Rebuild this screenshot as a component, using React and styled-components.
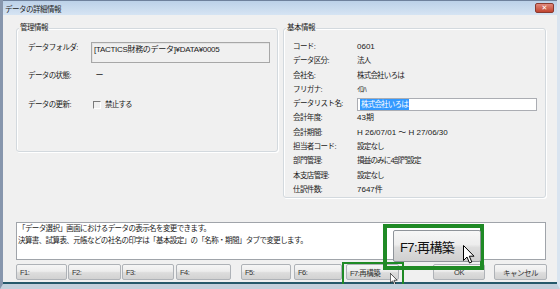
import React from 'react';
import styled, { createGlobalStyle } from 'styled-components';

const Global = createGlobalStyle`
  html, body { margin: 0; padding: 0; background: #f0f0f0; }
  body { font-family: "Liberation Sans", "Noto Sans CJK JP", sans-serif; font-size: 8px; color: #1a1a1a; }
  * { box-sizing: border-box; }
`;

const Window = styled.div`
  position: relative;
  width: 560px;
  height: 289px;
  display: flex;
  flex-direction: column;
  background: #f0f0f0;
  border-left: 3px solid #8796ad;
  border-right: 3px solid #d9e4f0;
  border-bottom: 5px solid #c3d0dc;
  box-shadow: inset 0 -2px 0 #25596b;
  overflow: hidden;
`;

const TitleBar = styled.div`
  height: 15px;
  flex: none;
  display: flex;
  align-items: center;
  justify-content: space-between;
  padding: 0 3px 0 2px;
  background: linear-gradient(#bcd1e8, #d6e4f3);
  border-top: 1px solid #6f819c;
  font-size: 7.5px;
  letter-spacing: -0.5px;
  color: #1e1e1e;
`;

const CloseBtn = styled.div`
  width: 19px;
  height: 10px;
  border-radius: 2px;
  background: linear-gradient(#e0877a, #c1442f);
  border: 1px solid #8a3a30;
  display: flex;
  align-items: center;
  justify-content: center;
  color: #fff;
  font-family: "DejaVu Sans", sans-serif;
  font-size: 7px;
  font-weight: bold;
  letter-spacing: 0;
  line-height: 1;
`;

const Body = styled.div`
  flex: 1;
  display: flex;
  flex-direction: column;
  padding: 7px 11px 0 13px;
`;

const Groups = styled.div`
  display: grid;
  grid-template-columns: 262px 263px;
  column-gap: 5px;
  align-items: start;
`;

const Group = styled.div`
  position: relative;
  margin-top: 6px;
  height: ${p => p.$h}px;
  background: #f0f0f0;
  border: 1px solid #d3d9de;
  border-radius: 3px;
  box-shadow: inset 1px 1px 0 #fff, 1px 1px 0 #fff;
`;

const GroupTitle = styled.span`
  position: absolute;
  top: -7px;
  left: 2px;
  padding: 0 1px;
  background: #f0f0f0;
  line-height: 12px;
  font-size: 7.5px;
  letter-spacing: -0.5px;
`;

const LeftGrid = styled.div`
  display: grid;
  grid-template-columns: 63px 179px;
  padding: 13px 0 0 11px;
`;

const Label = styled.div`
  line-height: 12px;
  margin-top: ${p => p.$mt || 0}px;
  white-space: nowrap;
  font-size: 7.5px;
  letter-spacing: -0.6px;
`;

const Value = styled.div`
  line-height: 12px;
  margin-top: ${p => p.$mt || 0}px;
  white-space: nowrap;
  display: flex;
  align-items: center;
  gap: 4px;
  font-size: ${p => (p.$cjk ? '7.5px' : '8px')};
  letter-spacing: ${p => (p.$cjk ? '-0.8px' : '0')};
`;

const FolderBox = styled.div`
  height: 21px;
  border: 1px solid #a7a7a7;
  box-shadow: inset 1px 1px 0 #e3e3e3;
  padding: 1px 2px;
  line-height: 12px;
  white-space: nowrap;
  overflow: hidden;
  letter-spacing: -0.3px;
`;

const Check = styled.span`
  width: 8px;
  height: 8px;
  margin-left: 2px;
  border-top: 1px solid #7a7a7a;
  border-left: 1px solid #7a7a7a;
  border-right: 1px solid #fff;
  border-bottom: 1px solid #fff;
  background: #f0f0f0;
  display: inline-block;
`;

const RightGrid = styled.div`
  display: grid;
  grid-template-columns: 64px 180px;
  grid-template-rows: repeat(11, 14px);
  row-gap: 0.3px;
  align-items: center;
  padding: 11px 0 0 9px;
`;

const InputBox = styled.div`
  height: 13px;
  border: 1px solid #abadb3;
  background: #fff;
  display: flex;
  align-items: center;
  padding-left: 2px;
`;

const Selected = styled.span`
  background: #3399ff;
  color: #fff;
  line-height: 11px;
  padding: 0 1px;
  font-size: 7.5px;
  letter-spacing: -0.8px;
`;

const Help = styled.div`
  margin-top: 24px;
  height: 38px;
  width: 530px;
  background: #fff;
  border: 1px solid #a0a4aa;
  padding: 0 1px;
  line-height: 12px;
  font-size: 7.5px;
  letter-spacing: -0.6px;
  white-space: nowrap;
`;

const Buttons = styled.div`
  margin-top: 4px;
  display: flex;
  height: 16px;
  width: 531px;
`;

const FButton = styled.div`
  width: ${p => p.$w}px;
  margin-left: ${p => p.$ml || 0}px;
  height: 16px;
  flex: none;
  border: 1px solid #aeb2b7;
  border-radius: 2px;
  background: linear-gradient(#f6f6f6 0%, #ececec 45%, #dcdcdc 55%, #d2d2d2 100%);
  display: flex;
  align-items: center;
  justify-content: ${p => (p.$center ? 'center' : 'flex-start')};
  padding-left: ${p => (p.$center ? 0 : 3)}px;
  font-size: 7.5px;
  letter-spacing: -0.5px;
  color: #333;
  white-space: nowrap;
`;

const Highlight = styled.div`
  position: absolute;
  left: ${p => p.$x}px;
  top: ${p => p.$y}px;
  width: ${p => p.$w}px;
  height: ${p => p.$h}px;
  border: ${p => p.$b}px solid #1f8a25;
  pointer-events: none;
`;

const BigBtn = styled.div`
  position: absolute;
  left: 390px;
  top: 230px;
  width: 88px;
  height: 32px;
  border: 1px solid #8f949a;
  border-radius: 2px;
  background: linear-gradient(#f7f7f7 0%, #ededed 45%, #dddddd 55%, #cfcfcf 100%);
  display: flex;
  align-items: center;
  padding-left: 6px;
  font-size: 13px;
  letter-spacing: -0.6px;
  color: #111;
  white-space: nowrap;
`;

const CursorSvg = styled.svg`
  position: absolute;
  left: ${p => p.$x}px;
  top: ${p => p.$y}px;
  pointer-events: none;
`;

function Cursor({ x, y, s = 1 }) {
  return (
    <CursorSvg $x={x} $y={y} width={12 * s} height={19 * s} viewBox="0 0 12 19">
      <path d="M0.5 0.5 L0.5 15.5 L4 12 L6.5 18 L8.8 17 L6.3 11.2 L11 11.2 Z" fill="#fff" stroke="#000" strokeWidth="1" strokeLinejoin="round" />
    </CursorSvg>
  );
}

export default function App() {
  const rows = [
    ['コード:', '0601', false],
    ['データ区分:', '法人', true],
    ['会社名:', '株式会社いろは', true],
    ['フリガナ:', 'ｲﾛﾊ', true],
    ['データリスト名:', null, false],
    ['会計年度:', '43期', false],
    ['会計期間:', 'H 26/07/01 ～ H 27/06/30', false],
    ['担当者コード:', '設定なし', true],
    ['部門管理:', '損益のみに4部門設定', true],
    ['本支店管理:', '設定なし', true],
    ['仕訳件数:', '7647件', false],
  ];
  return (
    <>
      <Global />
      <Window>
        <TitleBar>
          <span>データの詳細情報</span>
          <CloseBtn>✕</CloseBtn>
        </TitleBar>
        <Body>
          <Groups>
            <Group $h={124}>
              <GroupTitle>管理情報</GroupTitle>
              <LeftGrid>
                <Label>データフォルダ:</Label>
                <FolderBox>[TACTICS財務のデータ]¥DATA¥0005</FolderBox>
                <Label $mt={7}>データの状態:</Label>
                <Value $mt={7}>&nbsp;&nbsp;ー</Value>
                <Label $mt={17}>データの更新:</Label>
                <Value $mt={17} $cjk><Check />禁止する</Value>
              </LeftGrid>
            </Group>
            <Group $h={170}>
              <GroupTitle>基本情報</GroupTitle>
              <RightGrid>
                {rows.map(([l, v, cjk]) => (
                  <React.Fragment key={l}>
                    <Label>{l}</Label>
                    {v === null ? (
                      <InputBox><Selected>株式会社いろは</Selected></InputBox>
                    ) : (
                      <Value $cjk={cjk}>{v}</Value>
                    )}
                  </React.Fragment>
                ))}
              </RightGrid>
            </Group>
          </Groups>
          <Help>
            「データ選択」画面におけるデータの表示名を変更できます。<br />
            決算書、試算表、元帳などの社名の印字は「基本設定」の「名称・期間」タブで変更します。
          </Help>
          <Buttons>
            <FButton $w={51}>F1:</FButton>
            <FButton $w={53} $ml={1}>F2:</FButton>
            <FButton $w={52} $ml={1}>F3:</FButton>
            <FButton $w={55} $ml={2}>F4:</FButton>
            <FButton $w={50} $ml={10}>F5:</FButton>
            <FButton $w={48} $ml={3}>F6:</FButton>
            <FButton $w={53} $ml={4}>F7:再構築</FButton>
            <FButton $w={52} $ml={34} $center>OK</FButton>
            <FButton $w={53} $ml={9} $center>キャンセル</FButton>
          </Buttons>
        </Body>
        <Highlight $x={339} $y={262} $w={62} $h={24} $b={2} />
        <Cursor x={387} y={273} s={0.65} />
        <Highlight $x={380} $y={224} $w={101} $h={46} $b={4} />
        <BigBtn>F7:再構築</BigBtn>
        <Cursor x={460} y={245} s={1.0} />
      </Window>
    </>
  );
}
